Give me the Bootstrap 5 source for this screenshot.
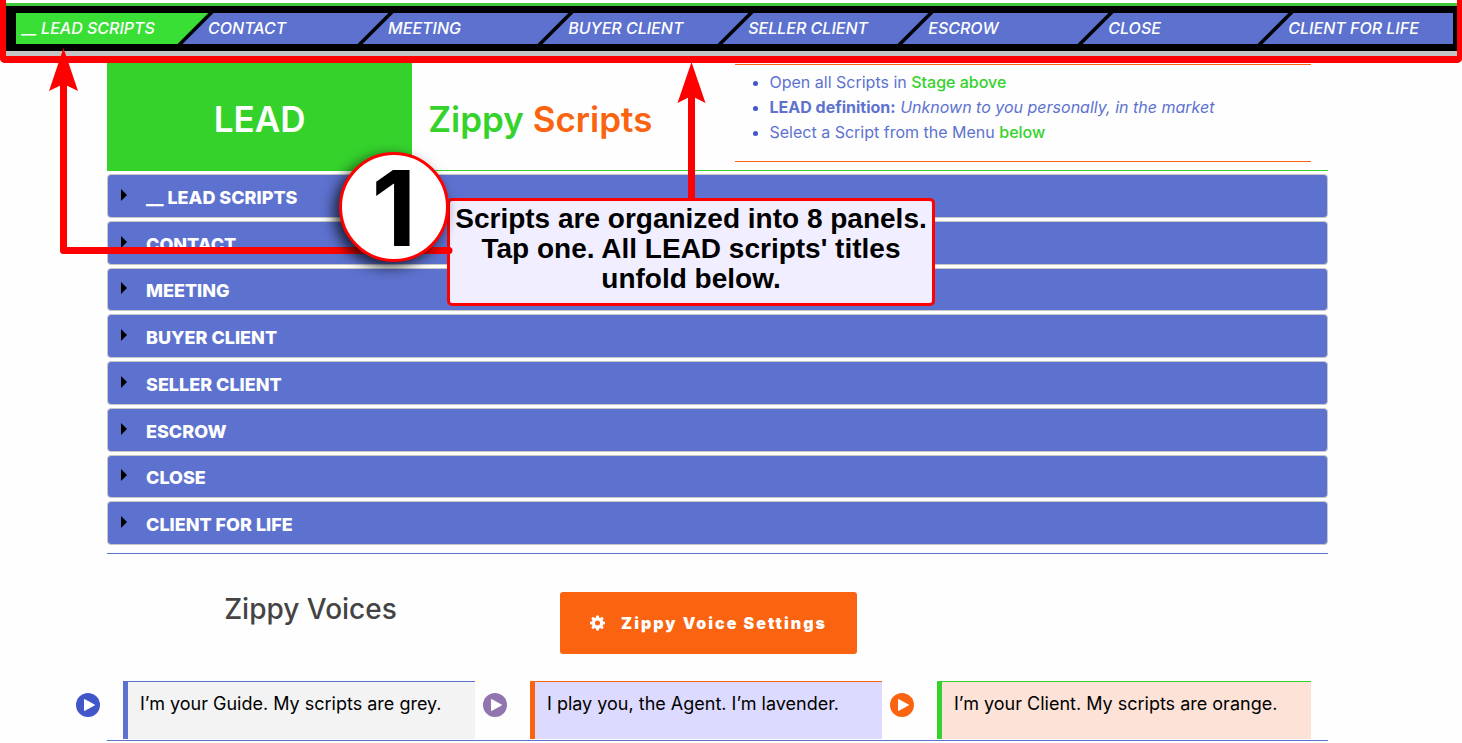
<!DOCTYPE html>
<html lang="en">
<head>
<meta charset="utf-8">
<meta name="viewport" content="width=device-width, initial-scale=1">
<title>Zippy Scripts</title>
<link href="https://cdn.jsdelivr.net/npm/bootstrap@5.3.0/dist/css/bootstrap.min.css" rel="stylesheet">
<style>
:root{--zblue:#5d72cf;--zgreen:#35d22c;--zorange:#fa6310;--zred:#f00}
body{font-family:Inter,"Open Sans",sans-serif;background:#fefefe;color:#000}
a{text-decoration:none}
.stage-frame{border:solid var(--zred);border-width:0 5px 7px 6px;border-radius:0 0 5px 5px;padding-top:3px}
.stage-bar{border-top:3px solid #40c83c;background:#000;padding:7px 4px 7px 10px}
.stage-shadow{height:5px;background:#c4c4c4}
.stages{display:grid;grid-template-columns:repeat(7,12.53%) 1fr;overflow:hidden}
.stages a{position:relative;z-index:0;height:31px;line-height:31px;padding-left:12px;color:#fff;font-size:16px;font-weight:500;font-style:italic;white-space:nowrap}
.stages a::before{content:"";position:absolute;z-index:-1;inset:0 3px 0 2px;background:var(--zblue);transform:skewX(-45deg)}
.stages a:first-child{padding-left:6px}
.stages a:first-child::before{left:-20px;background:#3adf36}
.stages a:last-child::before{right:-20px}
.page{margin:0 134px 0 107px}
.hero{height:108px;border-bottom:1px solid var(--zgreen)}
.hero-title{font-size:35px;font-weight:600;line-height:40px}
.hero-lead{background:var(--zgreen);color:#fff;height:108px}
.t-green{color:var(--zgreen)}
.t-orange{color:var(--zorange)}
.tips{border:solid var(--zorange);border-width:1px 0;height:98px;margin:1px 17px 0;padding:5px 0 0 35px;color:var(--zblue);font-size:16px;line-height:25px;white-space:nowrap}
.tips b{font-weight:700}
.tips .t-green{font-weight:500}
.tips li::marker{color:#4056c9}
.panels{display:grid;grid-auto-rows:1fr;gap:3px;min-height:371px;margin-top:3px}
.panels button{display:flex;align-items:center;border:1px solid #c8c8c8;border-radius:4px;background:var(--zblue);color:#fff;font-size:18px;font-weight:800;text-align:left;padding:3px 0 0 13px}
.panels button::before{content:"";border:solid transparent;border-width:6px 0 6px 6px;border-left-color:#000;margin:-5px 19px 0 0}
.voices-head{border-top:1px solid var(--zblue);margin-top:8px;height:128px}
.voices-title{font-size:28px;font-weight:500;line-height:32px;color:#444;padding-top:39px;margin:0}
.btn-voice{background:var(--zorange);color:#fff;border-radius:3px;width:297px;height:62px;margin:38px 0 0 46px;font-size:16px;font-weight:900;letter-spacing:2px;border:0}
.btn-voice:hover{background:#e65a0d;color:#fff}
.voice-row{display:grid;grid-template-columns:407px 407px 1fr;margin-left:-31px;padding-right:17px}
.voice{display:flex;gap:23px;padding-right:8px}
.voice:last-child{padding-right:0}
.play{border:0;padding:0;width:24px;height:24px;background:none;margin-top:12px;flex:none;line-height:0}
.voice p{flex:1;margin:0;height:58px;padding:7px 12px;border:solid;border-width:1px 0 0 5px;font-size:18px;line-height:30px;white-space:nowrap}
.v-guide{background:#f3f3f3;border-color:var(--zblue)!important}
.v-agent{background:#dcdaff;border-color:var(--zorange)!important}
.v-client{background:#fde2d7;border-color:var(--zgreen)!important}
.end-line{border-top:1px solid var(--zblue);margin-top:1px}
/* tutorial annotations that float over the page */
.arrows{position:absolute;left:0;top:0;pointer-events:none}
.callout{position:absolute;left:447px;top:198px;width:488px;height:108px;border:3px solid var(--zred);border-radius:5px;background:#f0eeff;font:700 28px/30px "Liberation Sans",Arial,sans-serif;text-align:center;padding-top:3px;white-space:nowrap}
.step{position:absolute;left:339px;top:152px;width:110px;height:110px;border:3px solid var(--zred);border-radius:50%;background:#fff;font:700 104px/106px Inter,sans-serif;text-align:center;box-shadow:-5px 5px 14px rgba(0,0,0,.75)}
</style>
</head>
<body class="position-relative">
<header class="stage-frame">
  <nav class="stage-bar" aria-label="Stages">
    <div class="stages">
      <a href="#lead">__ LEAD SCRIPTS</a><a href="#contact">CONTACT</a><a href="#meeting">MEETING</a><a href="#buyer">BUYER CLIENT</a><a href="#seller">SELLER CLIENT</a><a href="#escrow">ESCROW</a><a href="#close">CLOSE</a><a href="#life">CLIENT FOR LIFE</a>
    </div>
  </nav>
  <div class="stage-shadow"></div>
</header>
<main class="page">
  <section class="row g-0 hero">
    <div class="col-3 hero-lead d-flex align-items-center justify-content-center pt-1"><h1 class="hero-title m-0">LEAD</h1></div>
    <div class="col-3 d-flex align-items-center ps-3 pt-1"><h2 class="hero-title m-0 text-nowrap"><span class="t-green">Zippy</span> <span class="t-orange">Scripts</span></h2></div>
    <div class="col-6">
      <ul class="tips">
        <li>Open all Scripts in <span class="t-green">Stage above</span></li>
        <li><b>LEAD definition:</b> <em>Unknown to you personally, in the market</em></li>
        <li>Select a Script from the Menu <span class="t-green">below</span></li>
      </ul>
    </div>
  </section>
  <section class="panels">
    <button type="button" id="lead">__ LEAD SCRIPTS</button>
    <button type="button" id="contact">CONTACT</button>
    <button type="button" id="meeting">MEETING</button>
    <button type="button" id="buyer">BUYER CLIENT</button>
    <button type="button" id="seller">SELLER CLIENT</button>
    <button type="button" id="escrow">ESCROW</button>
    <button type="button" id="close">CLOSE</button>
    <button type="button" id="life">CLIENT FOR LIFE</button>
  </section>
  <section class="row g-0 voices-head">
    <div class="col-4 text-center"><h2 class="voices-title">Zippy Voices</h2></div>
    <div class="col-4">
      <button type="button" class="btn btn-voice d-flex align-items-center justify-content-center gap-3 text-nowrap">
        <svg width="15" height="16" viewBox="0 0 16 16" aria-hidden="true"><path fill="#fff" fill-rule="evenodd" d="M6.7 0h2.6l.4 2.1 1.3.5 1.8-1.2 1.8 1.8L13.4 5l.5 1.3 2.1.4v2.6l-2.1.4-.5 1.3 1.2 1.8-1.8 1.8-1.8-1.2-1.3.5-.4 2.1H6.7l-.4-2.1-1.3-.5-1.8 1.2-1.8-1.8L2.6 11l-.5-1.3L0 9.300V6.700l2.100-.4.500-1.300-1.200-1.800 1.800-1.800L5 2.600l1.300-.5zM8 5.300a2.700 2.700 0 1 0 0 5.400 2.700 2.700 0 0 0 0-5.400z"/></svg>
        Zippy Voice Settings
      </button>
    </div>
  </section>
  <section class="voice-row">
    <div class="voice">
      <button type="button" class="play" aria-label="Play guide voice"><svg width="24" height="24" viewBox="0 0 24 24"><circle cx="12" cy="12" r="12" fill="#4056c9"/><path d="M8.500 6.500v11L18.500 12z" fill="#fff" stroke="#fff" stroke-linejoin="round"/></svg></button>
      <p class="v-guide">I’m your Guide. My scripts are grey.</p>
    </div>
    <div class="voice">
      <button type="button" class="play" aria-label="Play agent voice"><svg width="24" height="24" viewBox="0 0 24 24"><circle cx="12" cy="12" r="12" fill="#9274ae"/><path d="M8.500 6.500v11L18.500 12z" fill="#fff" stroke="#fff" stroke-linejoin="round"/></svg></button>
      <p class="v-agent">I play you, the Agent. I’m lavender.</p>
    </div>
    <div class="voice">
      <button type="button" class="play" aria-label="Play client voice"><svg width="24" height="24" viewBox="0 0 24 24"><circle cx="12" cy="12" r="12" fill="#fa6310"/><path d="M8.500 6.500v11L18.500 12z" fill="#fff" stroke="#fff" stroke-linejoin="round"/></svg></button>
      <p class="v-client">I’m your Client. My scripts are orange.</p>
    </div>
  </section>
  <div class="end-line"></div>
</main>
<div class="callout">Scripts are organized into 8 panels.<br>Tap one. All LEAD scripts' titles<br>unfold below.</div>
<svg class="arrows" width="720" height="260" aria-hidden="true">
  <path fill="none" stroke="#f00" stroke-width="7" stroke-linejoin="round" d="M63.500 80V250.500H449M691.500 95V200"/>
  <circle cx="449" cy="250.500" r="3.500" fill="#f00"/>
  <path fill="#f00" d="M63.500 48L78 91 63.500 84 49 91zM691.500 62L705.500 103 691.500 96 677.500 103z"/>
</svg>
<div class="step">1</div>
<script src="https://cdn.jsdelivr.net/npm/bootstrap@5.3.0/dist/js/bootstrap.bundle.min.js"></script>
</body>
</html>
